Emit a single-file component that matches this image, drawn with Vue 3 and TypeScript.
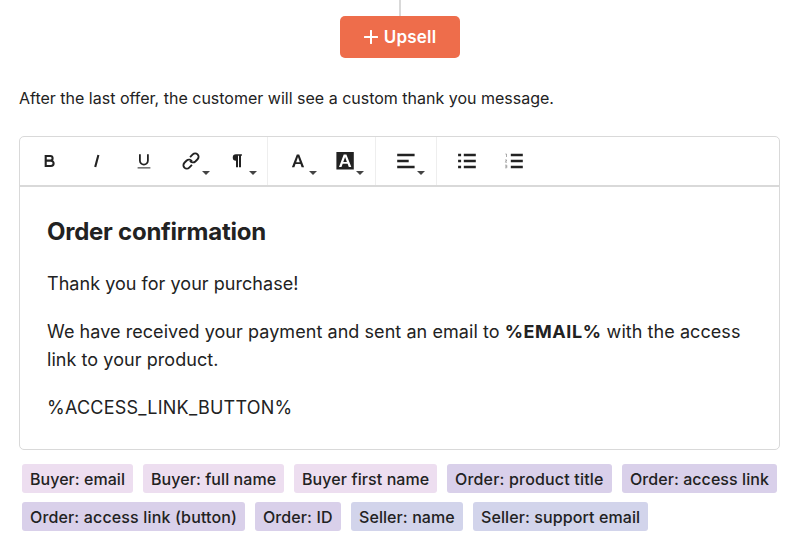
<script setup lang="ts">
interface Tag {
  label: string
  kind: 'buyer' | 'order' | 'seller'
  width: number
  tracking: number
}

const tags: Tag[] = [
  { label: 'Buyer: email', kind: 'buyer', width: 111, tracking: 0.04 },
  { label: 'Buyer: full name', kind: 'buyer', width: 141, tracking: 0.07 },
  { label: 'Buyer first name', kind: 'buyer', width: 143, tracking: 0.09 },
  { label: 'Order: product title', kind: 'order', width: 165, tracking: 0.18 },
  { label: 'Order: access link', kind: 'order', width: 155, tracking: 0.06 },
  { label: 'Order: access link (button)', kind: 'order', width: 223, tracking: 0.15 },
  { label: 'Order: ID', kind: 'order', width: 86, tracking: 0.1 },
  { label: 'Seller: name', kind: 'seller', width: 112, tracking: 0.08 },
  { label: 'Seller: support email', kind: 'seller', width: 175, tracking: 0.1 },
]

const groups: string[][] = [
  ['bold', 'italic', 'underline', 'link', 'paragraph'],
  ['color', 'background'],
  ['align'],
  ['bullets', 'numbers'],
]

const withMenu = new Set<string>(['link', 'paragraph', 'color', 'background', 'align'])
</script>

<template>
  <main class="page">
    <div class="connector"></div>
    <button class="upsell" type="button">
      <svg class="plus" viewBox="0 0 14 14"><path d="M7 .8v12.4M.8 7h12.4" /></svg>
      <span>Upsell</span>
    </button>
    <p class="intro">After the last offer, the customer will see a custom thank you message.</p>

    <section class="editor">
      <div class="toolbar">
        <div v-for="(group, i) in groups" :key="i" class="group">
          <button v-for="name in group" :key="name" class="tool" type="button" :aria-label="name">
            <svg class="icon" viewBox="0 0 24 24">
              <path v-if="name === 'bold'" class="line" d="M7.7 7h4.6a2.3 2.3 0 0 1 0 4.6H7.7zM7.7 11.6h5.2a2.7 2.7 0 0 1 0 5.4H7.7z" />
              <path v-else-if="name === 'italic'" class="line" d="M13.4 6 10.2 18" />
              <g v-else-if="name === 'underline'">
                <path class="line thin" d="M7.9 5.2v6.4a4 4 0 0 0 8 0V5.2" />
                <path class="hair" d="M5.6 18.9h12.8" />
              </g>
              <g v-else-if="name === 'link'" class="chain" transform="rotate(-45 12 12)">
                <path d="M9.9 15.4H6.1a3.4 3.4 0 0 1 0-6.8h3.2a3.4 3.4 0 0 1 3.2 4.2" />
                <path d="M14.1 8.6h3.8a3.4 3.4 0 0 1 0 6.8h-3.2a3.4 3.4 0 0 1-3.2-4.2" />
              </g>
              <path v-else-if="name === 'paragraph'" d="M15.9 5.2v1.6h-.9v11.5h-2V6.8h-1v11.5h-2v-6.6a3.25 3.25 0 0 1 0-6.5z" />
              <path v-else-if="name === 'color'" d="M10.8 5.6h2.4l4.9 12.7h-2.5l-1.1-3.2h-5l-1.1 3.2H5.9zM12 8l-1.8 5.2h3.6z" />
              <path v-else-if="name === 'background'" fill-rule="evenodd" d="M3.4 3h17.4v17.5H3.4zM10.7 5.4 6 18h2.5l1.2-3.2h4.9l1.2 3.2h2.5L13.4 5.4zM12.1 8l1.8 5h-3.6z" />
              <path v-else-if="name === 'align'" d="M3.2 4.8h17.4v2.4H3.2zM3.2 10.8h11.5v2.4H3.2zM3.2 16.8h17.4v2.4H3.2z" />
              <path v-else-if="name === 'bullets'" d="M3.1 4.8h3v2.5h-3zM3.1 10.8h3v2.5h-3zM3.1 16.7h3v2.5h-3zM8.8 4.8h12v2.5h-12zM8.8 10.8h12v2.5h-12zM8.8 16.7h12v2.5h-12z" />
              <g v-else>
                <path d="M8.8 4.8h12v2.5h-12zM8.8 10.8h12v2.5h-12zM8.8 16.7h12v2.5h-12z" />
                <path class="digits" d="M3.4 5h1.1v3M3 11h1.8l-1.5 2.2H5M3 16.2h1.8v2.6H3M3.4 17.5h1.3" />
              </g>
            </svg>
            <svg v-if="withMenu.has(name)" class="caret" viewBox="0 0 8 4"><path d="M0 0h8L4 4z" /></svg>
          </button>
        </div>
      </div>
      <article class="content">
        <h2>Order confirmation</h2>
        <p class="thanks">Thank you for your purchase!</p>
        <p class="message">We have received your payment and sent an email to <strong>%EMAIL%</strong> with the access link to your product.</p>
        <p class="token">%ACCESS_LINK_BUTTON%</p>
      </article>
    </section>

    <div class="tags">
      <span
        v-for="tag in tags"
        :key="tag.label"
        class="tag"
        :class="tag.kind"
        :style="{ width: `${tag.width}px`, letterSpacing: `${tag.tracking}px` }"
      >{{ tag.label }}</span>
    </div>
  </main>
</template>

<style>
body {
  margin: 0;
  background: #fff;
}
</style>

<style scoped>
.page {
  box-sizing: border-box;
  height: 552px;
  width: 796px;
  padding: 0 16px 0 19px;
  overflow: hidden;
  display: flex;
  flex-direction: column;
  color: #222;
  font-family: Inter, "Liberation Sans", sans-serif;
}
.connector {
  width: 2px;
  height: 16px;
  margin-left: 380px;
  background: #d9d9d9;
}
.upsell {
  width: 120px;
  height: 42px;
  margin-left: 321px;
  padding: 0;
  border: 0;
  border-radius: 5px;
  background: #ee6d4b;
  color: #fff;
  font: 600 17px/24px Inter, sans-serif;
  letter-spacing: 0.2px;
  display: flex;
  align-items: center;
  justify-content: center;
  gap: 6px;
}
.plus {
  width: 14px;
  height: 14px;
  fill: none;
  stroke: #fff;
  stroke-width: 2;
  stroke-linecap: round;
}
.intro {
  margin: 28px 0 26px;
  font-size: 16px;
  line-height: 24px;
  white-space: nowrap;
}
.editor {
  box-sizing: border-box;
  width: 761px;
  height: 314px;
  border: 1px solid #d9d9d9;
  border-radius: 5px;
}
.toolbar {
  display: flex;
  height: 48px;
  border-bottom: 2px solid #d9d9d9;
}
.group {
  display: flex;
  padding: 0 7px 0 6.5px;
  border-left: 1px solid #eee;
}
.group:first-child {
  border-left: 0;
  padding: 0 6px 0 7px;
}
.tool {
  position: relative;
  width: 46.8px;
  height: 48px;
  padding: 0;
  border: 0;
  background: none;
  display: flex;
  align-items: center;
  justify-content: center;
}
.icon {
  width: 24px;
  height: 24px;
  fill: #222;
}
.line {
  fill: none;
  stroke: #222;
  stroke-width: 2.1;
}
.thin {
  stroke-width: 1.8;
}
.hair {
  stroke: #222;
  stroke-width: 1;
}
.chain {
  fill: none;
  stroke: #222;
  stroke-width: 1.9;
}
.digits {
  fill: none;
  stroke: #888;
  stroke-width: 0.7;
}
.caret {
  position: absolute;
  right: 4px;
  bottom: 10px;
  width: 8px;
  height: 4px;
  fill: #444;
}
.content {
  padding: 28px 27px 0;
  font-size: 18px;
  line-height: 28px;
}
.content h2 {
  margin: 0 0 21px;
  font-size: 24px;
  line-height: 34px;
  font-weight: 700;
  letter-spacing: -0.25px;
}
.content p {
  margin: 0 0 20px;
}
.content .thanks {
  letter-spacing: 0.04px;
}
.content .message {
  letter-spacing: 0.06px;
}
.content strong {
  letter-spacing: 0.55px;
}
.content .token {
  letter-spacing: 0.23px;
}
.tags {
  display: flex;
  flex-wrap: wrap;
  gap: 9px 10px;
  padding: 14px 0 0 3px;
}
.tag {
  box-sizing: border-box;
  height: 29px;
  padding: 0 8px;
  border-radius: 3px;
  font-size: 16px;
  line-height: 30px;
  font-weight: 500;
  white-space: nowrap;
}
.buyer {
  background: #eddef0;
}
.order {
  background: #d9d0ea;
}
.seller {
  background: #d2d4eb;
}
</style>
